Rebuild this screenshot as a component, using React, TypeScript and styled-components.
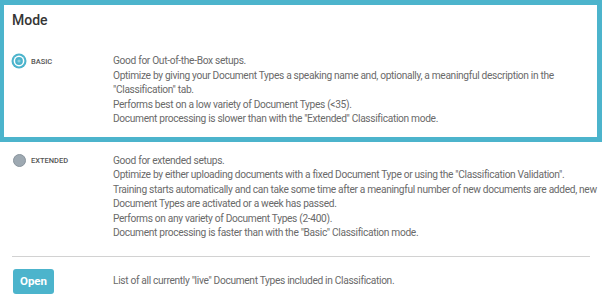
import React from "react";
import styled, { createGlobalStyle } from "styled-components";

const TEAL = "#4cb4cc";
const FONT = `Roboto, "Liberation Sans", Arial, sans-serif`;

const Global = createGlobalStyle`
  html, body { margin: 0; padding: 0; background: #fff; }
  body { font-family: ${FONT}; }
`;

const Page = styled.div`
  width: 602px;
  height: 300px;
  overflow: hidden;
  background: #fff;
`;

const Highlight = styled.section`
  border: 5px solid ${TEAL};
  border-left-width: 4px;
  padding: 5px 8px 10px 8px;
`;

const Title = styled.h2`
  margin: 0 0 24px 0;
  font-family: ${FONT};
  font-size: 14px;
  font-weight: 500;
  line-height: 20px;
  color: #353535;
`;

const Row = styled.div<{ $pad?: string }>`
  display: grid;
  grid-template-columns: 101px 1fr;
  padding: ${(p) => p.$pad || "0"};
`;

const Choice = styled.div`
  display: flex;
  align-items: center;
  height: 14.5px;
  gap: 5px;
`;

const RadioSlot = styled.span`
  width: 14px;
  height: 14px;
  display: flex;
  align-items: center;
  justify-content: center;
`;

const Label = styled.span`
  font-size: 7.5px;
  font-weight: 500;
  color: #555;
  text-transform: uppercase;
`;

const Desc = styled.div`
  font-size: 10.2px;
  line-height: 14.5px;
  letter-spacing: -0.33px;
  color: #6a6a6a;
`;

const Line = styled.div`
  white-space: nowrap;
`;

const Divider = styled.hr`
  border: none;
  border-top: 1px solid #d2d2d2;
  margin: 15px 12px 12px 12px;
`;

const ButtonRow = styled.div`
  display: grid;
  grid-template-columns: 101px 1fr;
  align-items: center;
  padding: 0 12px;
`;

const OpenButton = styled.button`
  width: 41px;
  height: 25px;
  margin-left: 1px;
  border: none;
  border-radius: 3px;
  background: ${TEAL};
  color: #fff;
  font-family: ${FONT};
  font-weight: 700;
  font-size: 11.5px;
  padding: 0;
  cursor: pointer;
`;

const SelectedRadio = () => (
  <svg width="16" height="16" viewBox="0 0 16 16" style={{ flex: "none" }}>
    <circle cx="8" cy="8" r="7.5" fill={TEAL} />
    <circle cx="8" cy="8" r="5.4" fill="#fff" />
    <circle cx="8" cy="8" r="3.9" fill={TEAL} />
    <circle cx="8" cy="8" r="1.6" fill="#8fd0df" />
  </svg>
);

const EmptyRadio = () => (
  <svg width="13" height="13" viewBox="0 0 13 13" style={{ flex: "none" }}>
    <circle cx="6.5" cy="6.5" r="6" fill="#9ea9b2" stroke="#88939c" strokeWidth="1" />
  </svg>
);

const basicLines = [
  "Good for Out-of-the-Box setups.",
  "Optimize by giving your Document Types a speaking name and, optionally, a meaningful description in the",
  "\"Classification\" tab.",
  "Performs best on a low variety of Document Types (<35).",
  "Document processing is slower than with the \"Extended\" Classification mode.",
];

const extendedLines = [
  "Good for extended setups.",
  "Optimize by either uploading documents with a fixed Document Type or using the \"Classification Validation\".",
  "Training starts automatically and can take some time after a meaningful number of new documents are added, new",
  "Document Types are activated or a week has passed.",
  "Performs on any variety of Document Types (2-400).",
  "Document processing is faster than with the \"Basic\" Classification mode.",
];

export default function App() {
  return (
    <Page>
      <Global />
      <Highlight>
        <Title>Mode</Title>
        <Row>
          <Choice>
            <RadioSlot>
              <SelectedRadio />
            </RadioSlot>
            <Label>Basic</Label>
          </Choice>
          <Desc>
            {basicLines.map((l) => (
              <Line key={l}>{l}</Line>
            ))}
          </Desc>
        </Row>
      </Highlight>
      <Row $pad="12px 12px 0 12px">
        <Choice>
          <RadioSlot>
            <EmptyRadio />
          </RadioSlot>
          <Label>Extended</Label>
        </Choice>
        <Desc>
          {extendedLines.map((l) => (
            <Line key={l}>{l}</Line>
          ))}
        </Desc>
      </Row>
      <Divider />
      <ButtonRow>
        <OpenButton>Open</OpenButton>
        <Desc>List of all currently "live" Document Types included in Classification.</Desc>
      </ButtonRow>
    </Page>
  );
}
